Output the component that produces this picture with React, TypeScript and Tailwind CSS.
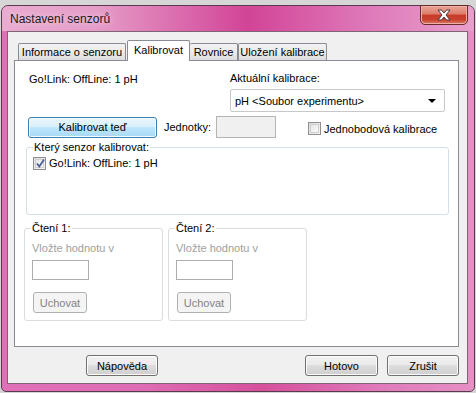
import React from "react";

const btn =
  "flex items-center justify-center rounded-[3px] border border-[#707070] bg-[linear-gradient(#f2f2f2,#ebebeb_45%,#dddddd_50%,#cfcfcf)] text-[#000] shadow-[inset_0_0_0_1px_#fcfcfc]";

function CheckBox({ checked }: { checked?: boolean }) {
  return (
    <div className="relative w-[13px] h-[13px] border border-[#8e8f8f] bg-[linear-gradient(135deg,#dcdcdc,#f6f6f6)] shrink-0">
      <div className="absolute inset-[1px] border border-[#cfcfcf] bg-[linear-gradient(135deg,#e6e6e6,#fbfbfb)]" />
      {checked && (
        <svg className="absolute left-[1px] top-[0px]" width="11" height="11" viewBox="0 0 11 11">
          <path d="M2 5.5 L4.3 8.5 L9 1.5" fill="none" stroke="#4a5f97" strokeWidth="1.8" />
        </svg>
      )}
    </div>
  );
}

export default function App() {
  return (
    <div className="w-[476px] h-[393px] overflow-hidden bg-[#d6d6d6] font-['Liberation_Sans',Arial,sans-serif] text-[11px] leading-[14px] text-black">
      <div className="ml-[1px] mt-[5px] w-[474px] h-[387px] rounded-t-[7px] rounded-b-[5px] border border-[#5b3a4f] bg-[linear-gradient(90deg,#e070b8,#de6cb4_30%,#d6509c_55%,#df7abb_80%,#e690c4)] flex flex-col">
        {/* title bar */}
        <div className="h-[25px] flex items-start justify-between bg-[linear-gradient(90deg,#e9acd0,#e59cc8_20%,#d24497_52%,#de7ab9_78%,#e8a0cc)] rounded-t-[6px]">
          <div className="pl-[8px] pt-[6px] text-[12px] leading-[14px] text-[#1a1a1a] [text-shadow:0_0_6px_#f6e0ec]">
            Nastavení senzorů
          </div>
          <div className="mr-[6px] w-[48px] h-[20px] -mt-px rounded-b-[5px] border border-[#6b2a2a] bg-[linear-gradient(#e9a596,#dd7b6c_45%,#c83a28_50%,#c9412e_75%,#dc7a62)] flex items-center justify-center shadow-[inset_0_0_0_1px_#f0b0a8]">
            <svg width="16" height="12" viewBox="0 0 16 12">
              <path
                d="M2 1 H5.5 L8 4 L10.5 1 H14 L10 6 L14 11 H10.5 L8 8 L5.5 11 H2 L6 6 Z"
                fill="#ffffff"
                stroke="#4a3a3a"
                strokeWidth="1"
                strokeLinejoin="round"
              />
            </svg>
          </div>
        </div>
        {/* client */}
        <div className="ml-[5px] mr-[6px] h-[353px] border border-[#7e6474] bg-[#f0f0f0] flex flex-col pt-[8px]">
          {/* tabs */}
          <div className="flex items-end pl-[10px] h-[20px] relative z-10">
            <div className="w-[108px] h-[17px] border border-b-0 border-[#898c95] rounded-t-[2px] bg-[linear-gradient(#f2f2f2,#ebebeb_50%,#dcdcdc)] flex items-center justify-center">
              Informace o senzoru
            </div>
            <div className="ml-[1px] w-[63px] h-[21px] -mb-px border border-b-0 border-[#898c95] rounded-t-[2px] bg-white flex items-start justify-center pt-[2px]">
              Kalibrovat
            </div>
            <div className="w-[48px] h-[17px] border border-b-0 border-l-0 border-[#898c95] rounded-t-[2px] bg-[linear-gradient(#f2f2f2,#ebebeb_50%,#dcdcdc)] flex items-center justify-center">
              Rovnice
            </div>
            <div className="w-[89px] h-[17px] border border-b-0 border-[#898c95] rounded-t-[2px] bg-[linear-gradient(#f2f2f2,#ebebeb_50%,#dcdcdc)] flex items-center justify-center">
              Uložení kalibrace
            </div>
          </div>
          {/* panel */}
          <div className="ml-[6px] w-[445px] h-[287px] border border-[#898c95] bg-white flex flex-col pt-[10px]">
            {/* row A */}
            <div className="flex">
              <div className="w-[215px] pl-[14px] pt-[1px]">Go!Link: OffLine: 1 pH</div>
              <div className="flex flex-col">
                <div>Aktuální kalibrace:</div>
                <div className="mt-[4px] w-[215px] h-[23px] border border-[#c8c8c8] rounded-[2px] bg-white flex items-center justify-between pl-[4px] pr-[8px]">
                  <span>pH &lt;Soubor experimentu&gt;</span>
                  <svg width="8" height="4" viewBox="0 0 8 4">
                    <path d="M0 0 H8 L4 4 Z" fill="#000" />
                  </svg>
                </div>
              </div>
            </div>
            {/* row B */}
            <div className="flex items-center h-[23px] mt-[3px] pl-[13px]">
              <div className="w-[129px] h-[21px] mt-[1px] rounded-[3px] border border-[#3c7fb1] bg-[linear-gradient(#eaf6fd,#d9f0fc_45%,#bee6fd_50%,#a7d9f5)] shadow-[inset_0_0_0_1px_#f4fbfe] flex items-center justify-center">
                Kalibrovat teď
              </div>
              <div className="ml-[7px] w-[52px]">Jednotky:</div>
              <div className="w-[60px] h-[22px] border border-[#b5b5b5] bg-[#f0f0f0]" />
              <div className="ml-[32px] mt-[4px] flex items-center">
                <CheckBox />
                <span className="ml-[3px]">Jednobodová kalibrace</span>
              </div>
            </div>
            {/* group 1 */}
            <fieldset className="ml-[11px] mt-[2px] w-[423px] h-[75px] border border-[#d5dfe5] rounded-[3px] px-[6px]">
              <legend className="px-[1px]">Který senzor kalibrovat:</legend>
              <div className="flex items-center mt-[2px]">
                <CheckBox checked />
                <span className="ml-[3px]">Go!Link: OffLine: 1 pH</span>
              </div>
            </fieldset>
            {/* reading groups */}
            <div className="flex ml-[9px] mt-[6px] gap-[5px]">
              {["Čtení 1:", "Čtení 2:"].map((t) => (
                <fieldset key={t} className="w-[139px] h-[100px] border border-[#d8dde1] rounded-[3px] px-[6px]">
                  <legend className="px-[1px]">{t}</legend>
                  <div className="pl-[1px] mt-[6px] text-[#a0a0a0]">Vložte hodnotu v</div>
                  <div className="ml-[1px] mt-[5px] w-[57px] h-[20px] border border-[#adadad] bg-white" />
                  <div className="ml-[2px] mt-[12px] w-[54px] h-[21px] rounded-[3px] border border-[#adb2b5] bg-[#f4f4f4] text-[#838383] flex items-center justify-center">
                    Uchovat
                  </div>
                </fieldset>
              ))}
            </div>
          </div>
          {/* bottom buttons */}
          <div className="flex mt-[8px] pl-[78px] pr-[8px]">
            <div className={`${btn} w-[72px] h-[21px]`}>Nápověda</div>
            <div className="flex-1" />
            <div className={`${btn} w-[73px] h-[21px]`}>Hotovo</div>
            <div className={`${btn} ml-[9px] w-[72px] h-[21px]`}>Zrušit</div>
          </div>
        </div>
      </div>
    </div>
  );
}
